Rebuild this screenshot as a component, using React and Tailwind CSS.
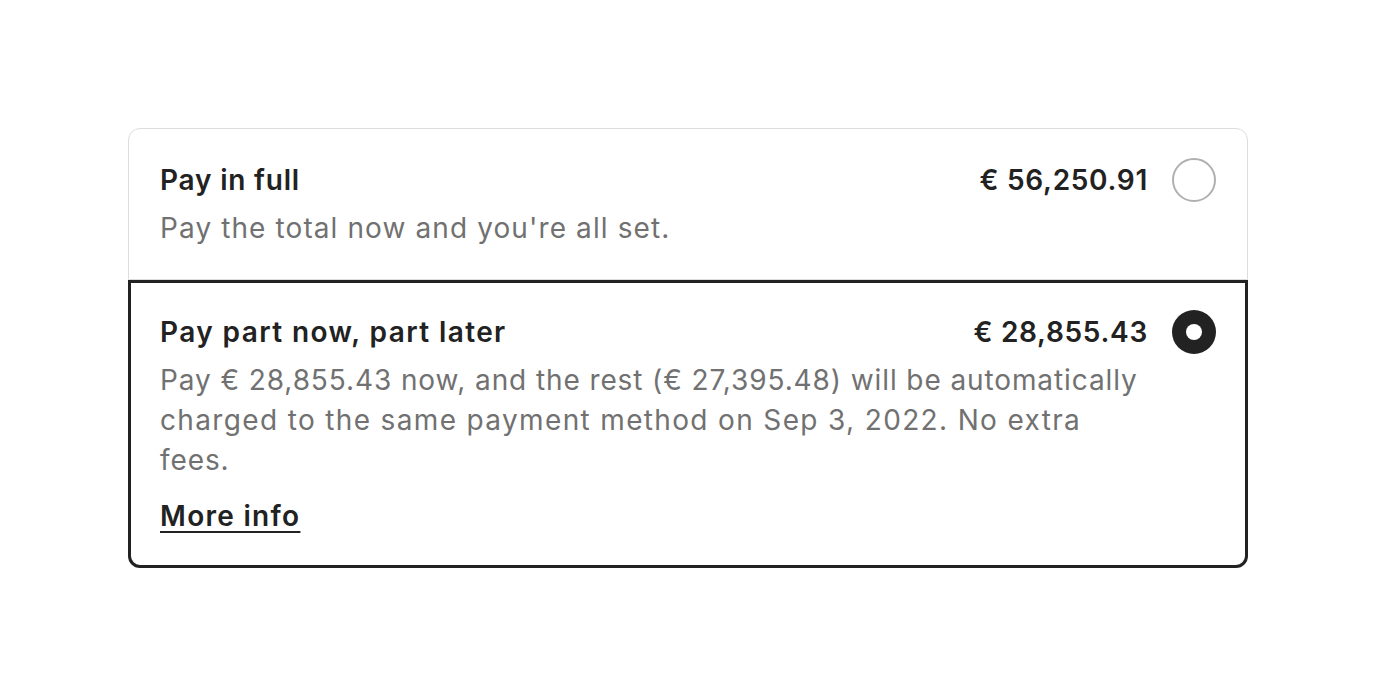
import React from "react";

function Radio({ checked }) {
  if (checked) {
    return (
      <div className="flex h-[44px] w-[44px] shrink-0 items-center justify-center rounded-full bg-[#222222]">
        <div className="h-[16px] w-[16px] rounded-full bg-white" />
      </div>
    );
  }
  return <div className="h-[44px] w-[44px] shrink-0 rounded-full border-2 border-[#b0b0b0] bg-white" />;
}

export default function App() {
  return (
    <div
      className="min-h-screen bg-white px-[128px] pt-[128px] text-[#222222]"
      style={{ fontFamily: 'Inter, "Noto Sans", sans-serif' }}
    >
      <div className="flex flex-col">
        <div className="flex items-start gap-[24px] rounded-t-[12px] border border-[#dddddd] px-[31px] pb-[31px] pt-[31px]">
          <div className="flex min-w-0 flex-1 flex-col gap-[8px]">
            <div className="flex items-center justify-between">
              <span className="text-[28px] font-semibold leading-[40px] tracking-[0.8px]">Pay in full</span>
              <span className="text-[28px] font-semibold leading-[40px] tracking-[0.7px]">€ 56,250.91</span>
            </div>
            <div className="text-[28px] leading-[40px] tracking-[1.1px] text-[#717171]">Pay the total now and you're all set.</div>
          </div>
          <div className="flex h-[40px] items-center">
            <Radio checked={false} />
          </div>
        </div>
        <div className="flex items-start gap-[24px] rounded-b-[12px] border-[3px] border-[#222222] px-[29px] pb-[29px] pt-[29px]">
          <div className="flex min-w-0 flex-1 flex-col">
            <div className="flex items-center justify-between">
              <span className="text-[28px] font-semibold leading-[40px] tracking-[1.4px]">Pay part now, part later</span>
              <span className="text-[28px] font-semibold leading-[40px] tracking-[0.7px]">€ 28,855.43</span>
            </div>
            <div className="mt-[8px] whitespace-nowrap text-[28px] leading-[40px] tracking-[0.9px] text-[#717171]">
              Pay € 28,855.43 now, and the rest (€ 27,395.48) will be automatically
              <br />
              <span className="tracking-[1.35px]">charged to the same payment method on Sep 3, 2022. No extra</span>
              <br />
              fees.
            </div>
            <div className="mt-[16px]">
              <a className="text-[28px] font-semibold leading-[40px] tracking-[1.3px] underline decoration-2 underline-offset-[5px]" href="#">
                More info
              </a>
            </div>
          </div>
          <div className="flex h-[40px] items-center">
            <Radio checked={true} />
          </div>
        </div>
      </div>
    </div>
  );
}
